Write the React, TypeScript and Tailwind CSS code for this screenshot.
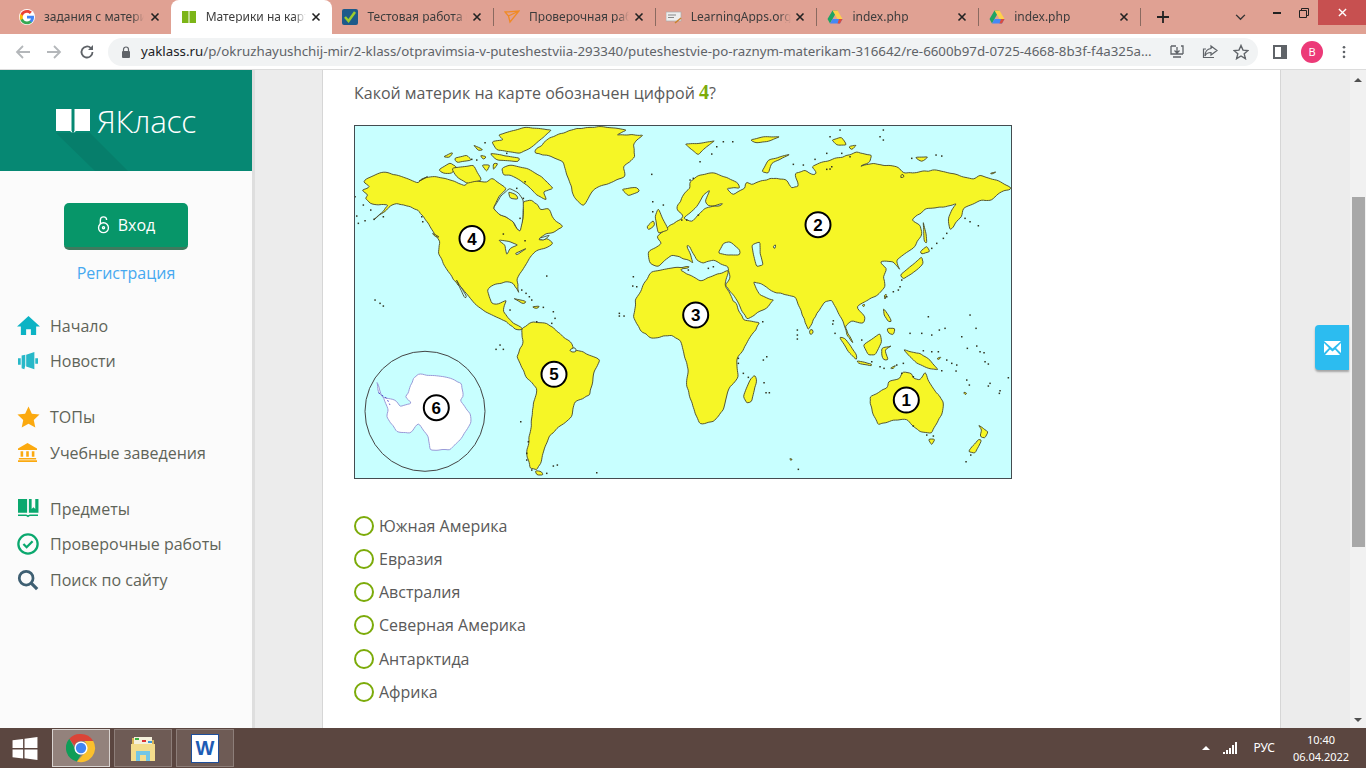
import React from "react";

// points are read off 3x crops of the map, so each crop has its own origin
const z = (ox: number, oy: number, s: string) =>
  s
    .trim()
    .split(/\s+/)
    .map((p) => {
      const [x, y] = p.split(",").map(Number);
      return `${(ox + x / 3).toFixed(1)},${(oy + y / 3).toFixed(1)}`;
    })
    .join(" ");

const z5 = (s: string) => z(350, 120, s);
const z6 = (s: string) => z(680, 120, s);
const z7 = (s: string) => z(350, 300, s);
const z8 = (s: string) => z(680, 300, s);

let seed = 11;
const rnd = () => {
  seed = (seed * 16807) % 2147483647;
  return seed / 2147483647 - 0.5;
};

// roughen a traced outline a little and round it, so that it reads as a coast
function coast(s: string, amp = 1.5) {
  const pts = s
    .trim()
    .split(/\s+/)
    .map((p) => p.split(",").map(Number));
  const out: number[][] = [];
  pts.forEach((a, i) => {
    const b = pts[(i + 1) % pts.length];
    const d = Math.hypot(b[0] - a[0], b[1] - a[1]) || 1;
    const n = Math.max(1, Math.round(d / 4));
    for (let k = 0; k < n; k++) {
      const t = k / n;
      const off = k === 0 ? 0 : rnd() * amp;
      out.push([
        a[0] + (b[0] - a[0]) * t - ((b[1] - a[1]) / d) * off,
        a[1] + (b[1] - a[1]) * t + ((b[0] - a[0]) / d) * off,
      ]);
    }
  });
  const mid = (p: number[], q: number[]) => `${((p[0] + q[0]) / 2).toFixed(1)} ${((p[1] + q[1]) / 2).toFixed(1)}`;
  let path = `M${mid(out[out.length - 1], out[0])}`;
  out.forEach((p, i) => {
    path += `Q${p[0].toFixed(1)} ${p[1].toFixed(1)} ${mid(p, out[(i + 1) % out.length])}`;
  });
  return path + "Z";
}

const northAmerica = z5(
  "40,185 60,172 95,157 120,160 140,165 170,175 205,190 212,178 235,172 260,170 285,175 300,180 325,190 345,198 355,185 375,180 395,185 410,187 425,175 440,185 455,195 470,205 450,225 430,265 450,285 470,292 490,305 500,325 510,335 518,300 520,265 520,245 545,240 565,255 570,270 595,265 610,295 640,320 615,335 590,340 565,360 590,355 610,370 585,385 555,395 530,430 510,460 500,480 507,520 490,490 465,485 430,495 412,510 425,550 445,552 470,540 460,575 490,610 520,628 495,628 470,605 420,582 385,560 365,540 340,510 310,480 285,440 265,400 270,365 250,335 240,320 205,270 170,258 140,250 125,255 110,270 70,300 100,275 115,255 85,255 60,250 45,235 55,225 35,210 60,200"
);
const greenland = z5(
  "555,90 575,78 590,60 620,45 650,35 680,25 720,22 760,20 830,30 800,45 880,45 860,60 850,75 855,110 820,140 825,170 790,185 760,195 730,210 715,235 700,258 680,240 670,225 660,190 650,165 640,125 590,105 555,100"
);
const southAmerica = z7(
  "515,85 550,65 590,70 630,100 665,130 670,150 700,155 750,180 730,225 720,285 675,305 665,350 635,375 600,405 585,440 575,480 560,510 540,505 530,460 540,400 550,320 560,265 530,235 500,170 520,125"
);
const eurasia = [
  z5("980,265 1000,225 1020,205"),
  z6(
    "30,185 60,165 100,158 140,172 175,190 180,205 150,205 140,205 160,225 195,205 200,185 215,195 270,175 290,175 320,180 335,205 355,200 345,160 375,150 400,165 410,160 395,140 430,125 510,105 530,95 575,105 570,125 540,140 580,130 650,140 675,160 720,155 770,150 810,160 880,178 900,165 950,180 995,205 965,215 935,240 905,240 850,265 845,290 810,330 805,300 815,270 830,250 790,262 740,265 695,300 720,315 725,345 700,385 650,420 660,450 640,425 600,425 620,445 610,470 615,500 585,530 555,545"
  ),
  z8(
    "555,5 530,20 555,50 550,70 515,62 495,80 520,130 500,105 490,65 455,0 435,5 410,40 385,90 350,0"
  ),
  z6("345,530 280,515 250,495 220,485 240,525 280,540"),
  z8("280,0 265,20 200,58 170,0"),
  z6(
    "135,495 150,475 145,440 100,420 70,430 50,420 30,380 20,375 40,430 0,410"
  ),
  z5("965,405 925,440 900,430 895,395 935,370 920,350 960,315 990,300 1000,290"),
].join(" ");
const africa = [
  z5("855,565 855,540 905,455 960,445 1020,440"),
  z6("0,450 30,465 60,483 145,450 135,495 160,545"),
  z8(
    "165,5 190,60 240,68 200,130 170,180 175,230 145,270 130,330 100,365 60,372 45,340 20,260 25,210 0,120"
  ),
  z7("965,105 905,115 870,90 850,50"),
].join(" ");
const australia = z8(
  "570,290 620,265 625,245 660,235 670,215 695,220 700,235 720,240 735,215 750,250 790,305 785,345 755,400 720,395 695,375 680,358 640,360 595,375 580,345 570,310"
);
const antarctica = z7(
  "190,235 205,222 290,232 335,250 340,290 330,300 360,340 362,370 330,420 300,450 240,450 235,410 205,370 180,400 140,395 110,350 115,330 100,290 85,275 80,245 95,290 135,300 150,320 185,310 165,290 175,280"
);

const continents = [northAmerica, greenland, southAmerica, africa, eurasia, australia].map((s) => coast(s));

const islands = [
  ...[
    "455,145 480,135 530,145 575,170 610,205 580,215 590,240 560,225 530,195 500,175 480,165 460,165",
    "265,150 300,128 320,140 305,160 280,160",
    "305,145 370,135 395,180 350,190 320,170",
    "445,45 525,22 605,30 570,60 540,85 510,100 440,90 425,65 460,60",
    "280,110 310,97 300,112",
    "312,115 350,105 365,120 320,128",
    "370,75 400,90 385,92",
    "390,105 410,110 400,120",
    "420,100 510,115 505,125 440,120",
    "395,135 420,135 410,155",
    "430,130 445,130 430,150",
    "815,208 860,202 870,213 835,228",
    "915,290 925,265 940,300 955,330 925,340",
    "890,320 910,300 915,315 895,330",
    "490,535 530,545 520,552",
    "205,185 235,168 215,180",
    "245,338 270,352 255,350",
  ].map(z5),
  ...["545,20 570,18 560,27", "555,512 575,515 580,525 560,525"].map(z7),
  ...[
    "225,225 230,240 215,305 200,310 190,290 210,240",
    "388,90 398,88 400,100 390,105",
    "478,110 495,115 530,165 530,180 505,155",
    "530,182 575,192 575,198 535,190",
    "550,135 600,100 605,125 585,165 565,165",
    "605,145 635,137 615,150 625,180 610,180 605,165",
    "610,25 625,45 635,65 625,65 612,45",
    "620,85 645,85 640,105 625,100",
    "670,148 690,155 720,160 750,180 775,210 745,205 710,190 690,170",
    "745,418 765,418 755,435",
    "895,375 925,395 915,415 900,410 905,390",
    "895,418 905,420 885,460 865,455",
    "770,175 785,170 775,180",
    "630,205 648,195 640,207",
    "850,275 862,280 855,285",
    "328,475 338,478 332,482",
  ].map(z8),
  ...[
    "660,465 725,410 730,430 710,450 670,478",
    "720,395 740,378 750,395 725,403",
    "730,305 738,340 740,370 733,365",
    "612,525 620,522 615,540",
    "545,555 555,552 552,562",
    "15,72 60,70 105,62 80,80 55,105 30,85",
    "245,155 265,120 330,103 275,130 265,160",
    "455,60 485,52 500,75 470,75",
    "505,80 530,75 515,90",
    "705,112 745,110 725,125",
    "930,160 950,155 935,163",
    "210,60 250,50 300,50 260,65 225,68",
    "665,160 675,170 660,175",
  ].map(z6),
].map((s) => coast(s, 0.7));

const inlandSeas = [
  z5("478,205 452,228 430,265 450,285 470,292 490,305 500,325 510,335 518,300 520,265 520,240 505,218"),
  z6("90,210 70,225 50,260 40,270 10,295 35,305 60,280 75,265 130,250 120,258 85,258 75,245"),
  z6("115,400 130,370 150,365 180,390 180,405 140,405"),
  z6("215,375 240,365 240,400 250,435 230,440 222,410"),
  z6("278,380 288,372 285,388"),
  z5("445,360 480,365 505,375 480,385 470,405 465,375"),
  z5("495,400 530,385 500,405"),
  z5("565,355 600,345 580,362"),
  z5("318,478 350,530 345,535"),
  z7("658,150 675,142 680,155 665,157"),
].map((s) => coast(s, 0.5));

const bayIsland = coast(z5("475,215 500,225 505,238 480,235"), 0.4);
const antarcticaPath = coast(antarctica, 1.2);

const dots: string[] = [
  ..."405,68 380,120 365,118 470,100 15,230 40,255 62,270 25,310 45,302 72,298 100,290 20,288 215,290 218,305 460,342 525,362 590,468 500,205 525,185 520,235 510,295 905,163 908,245 940,255 908,275 850,470 848,498 860,500 515,510 528,520 538,530 545,540 75,540 90,550 100,558"
    .split(" ")
    .map((p) => z5(p)),
  ..."480,30 610,30 600,50 610,60 440,148 450,147 455,140 510,110 620,530 640,515 655,510 660,500 665,480 800,340 790,355 770,370 755,385 870,305 895,317 855,295 405,118 370,135 340,133 60,125 130,65 158,65 110,80 95,102 450,50 440,100 485,100 768,105 785,108 695,115 30,180 40,175 5,300 55,285 20,300 85,445 100,440 25,450"
    .split(" ")
    .map((p) => z6(p)),
  ...(
    "480,30 450,135 438,148 460,148 512,365 535,425 530,460 530,480 545,510 590,520 610,498 622,495 740,518 580,22 610,35 615,55 605,70 808,40 822,48 808,48 560,65"
  )
    .split(" ")
    .map((p) => z7(p)),
  ...(
    "248,65 175,175 175,190 190,220 205,232 250,180 260,170 252,248 258,278 268,278 352,90 352,105 352,117 460,62 458,72 465,100 545,120 745,50 870,45 888,85 845,110 690,100 725,100 755,105 778,90 795,85 862,145 890,138 900,155 912,158 915,185 925,192 730,152 755,155 775,155 800,180 815,190 830,195 828,213 785,212 860,240 868,255 930,250 925,258 985,233 960,272 958,280 858,485 872,465 355,508 575,185 600,200 612,205 650,195 670,190 700,230 665,220 740,405 760,408 700,378"
  )
    .split(" ")
    .map((p) => z8(p)),
];

const markers = [
  { n: "4", x: 472, y: 238.5 },
  { n: "2", x: 818, y: 224.7 },
  { n: "3", x: 695.7, y: 315 },
  { n: "5", x: 554, y: 374.3 },
  { n: "6", x: 436.3, y: 407.7 },
  { n: "1", x: 906.3, y: 400 },
];

function WorldMap() {
  return (
    <svg viewBox="355 126 656 352" className="block h-full w-full">
      <g fill="#f6f626" stroke="#45452a" strokeWidth="0.9" strokeLinejoin="round">
        {continents.map((d, i) => (
          <path key={i} d={d} />
        ))}
        {islands.map((d, i) => (
          <path key={i} d={d} />
        ))}
      </g>
      <g fill="#c8ffff" stroke="#45452a" strokeWidth="0.9" strokeLinejoin="round">
        {inlandSeas.map((d, i) => (
          <path key={i} d={d} />
        ))}
      </g>
      <path d={bayIsland} fill="#f6f626" stroke="#45452a" strokeWidth="0.9" />
      <g fill="#333320">
        {dots.map((p, i) => {
          const [x, y] = p.split(",").map(Number);
          return <rect key={i} x={x - 0.7} y={y - 0.7} width="1.5" height="1.5" />;
        })}
      </g>
      <circle cx="425" cy="411.3" r="60" fill="none" stroke="#444" strokeWidth="1" />
      <path d={antarcticaPath} fill="#fff" stroke="#9a9ad8" strokeWidth="1" strokeLinejoin="round" />
      <polyline points={z7("85,278 110,295 120,315")} fill="none" stroke="#3a3ac4" strokeWidth="0.8" strokeDasharray="2 2" />
      {markers.map((m) => (
        <g key={m.n}>
          <circle cx={m.x} cy={m.y} r="12.5" fill="#fff" stroke="#000" strokeWidth="2" />
          <text
            x={m.x}
            y={m.y + 6}
            textAnchor="middle"
            fontSize="17"
            fontWeight="700"
            fontFamily="'Liberation Sans', sans-serif"
            fill="#000"
          >
            {m.n}
          </text>
        </g>
      ))}
    </svg>
  );
}

function GoogleIcon() {
  return (
    <svg viewBox="0 0 48 48" className="h-4 w-4 shrink-0 rounded-full bg-white">
      <path fill="#4285f4" d="M45 24.5c0-1.600-.1-3.100-.4-4.500H24v8.500h11.800c-.5 2.700-2 5-4.400 6.600v5.500h7.100C42.600 36.800 45 31.200 45 24.500z" />
      <path fill="#34a853" d="M24 46c5.900 0 10.900-2 14.500-5.400l-7.100-5.500c-2 1.300-4.500 2.100-7.400 2.100-5.700 0-10.500-3.800-12.200-9H4.500v5.700C8.100 41 15.500 46 24 46z" />
      <path fill="#fbbc05" d="M11.800 28.700c-.9-2.700-.9-5.600 0-8.300v-5.700H4.500c-3 6-3 13.100 0 19.100z" />
      <path fill="#ea4335" d="M24 11.400c3.200 0 6.100 1.100 8.400 3.300l6.300-6.300C34.900 4.800 29.900 3 24 3 15.500 3 8.100 8 4.500 14.700l7.300 5.700c1.700-5.200 6.500-9 12.200-9z" />
    </svg>
  );
}

function BookIcon() {
  return (
    <svg viewBox="0 0 16 16" className="h-4 w-4 shrink-0">
      <rect x="1" y="2" width="6.500" height="12" fill="#7cb518" />
      <rect x="8.500" y="2" width="6.500" height="12" fill="#7cb518" />
    </svg>
  );
}

function CheckIcon() {
  return (
    <svg viewBox="0 0 16 16" className="h-4 w-4 shrink-0">
      <rect width="16" height="16" rx="2" fill="#1d5a8a" />
      <path d="M3 8l3.500 4L13 3" fill="none" stroke="#9ccc2c" strokeWidth="2.500" />
    </svg>
  );
}

function SendIcon() {
  return (
    <svg viewBox="0 0 16 16" className="h-4 w-4 shrink-0" fill="none" stroke="#f08a24" strokeWidth="1.300">
      <path d="M1 3l14-1-9 11-1.500-6zM4.500 7L15 2" />
    </svg>
  );
}

function AppsIcon() {
  return (
    <svg viewBox="0 0 16 16" className="h-4 w-4 shrink-0">
      <rect x="0" y="3" width="15" height="9" fill="#eee" stroke="#aaa" strokeWidth="0.700" />
      <path d="M2 6h8M2 8.500h6" stroke="#888" />
      <path d="M9 14l6-5" stroke="#c9822c" strokeWidth="1.500" />
    </svg>
  );
}

function DriveIcon() {
  return (
    <svg viewBox="0 0 16 16" className="h-4 w-4 shrink-0">
      <polygon points="5.500,1.500 10.500,1.500 5.500,10 3,14.500 0.500,10" fill="#1fa463" />
      <polygon points="10.500,1.500 15.500,10 10.500,10 5.500,1.500" fill="#ffd04b" />
      <polygon points="3,14.500 13,14.500 15.500,10 5.500,10" fill="#4688f4" />
      <polygon points="13,14.500 15.500,10 12,10 10.500,14.500" fill="#dd4b3e" />
    </svg>
  );
}

const tabs = [
  { title: "задания с матери", icon: <GoogleIcon /> },
  { title: "Материки на карт", icon: <BookIcon />, active: true },
  { title: "Тестовая работа п", icon: <CheckIcon /> },
  { title: "Проверочная раб", icon: <SendIcon /> },
  { title: "LearningApps.org", icon: <AppsIcon /> },
  { title: "index.php", icon: <DriveIcon /> },
  { title: "index.php", icon: <DriveIcon /> },
];

function TabClose() {
  return (
    <svg viewBox="0 0 10 10" className="h-[10px] w-[10px] shrink-0" stroke="#222" strokeWidth="1.600">
      <path d="M1.500 1.500l7 7M8.500 1.500l-7 7" />
    </svg>
  );
}

function TabBar() {
  return (
    <div className="flex h-[34px] shrink-0 items-stretch bg-[#e0a193] pl-[9px] font-['Noto_Sans',sans-serif] text-[12px] text-[#3c3c3c]">
      {tabs.map((t, i) => (
        <div
          key={i}
          className={
            t.active
              ? "flex w-[161.700px] shrink-0 items-center rounded-t-lg bg-white pl-[10px] pr-[11px]"
              : i >= 2
                ? "flex w-[161.700px] shrink-0 items-center border-r border-r-[#8a6a60] bg-clip-padding pl-[10px] pr-[11px] [border-image:linear-gradient(transparent_25%,#8a6a60_25%,#8a6a60_75%,transparent_75%)_1]"
                : "flex w-[161.700px] shrink-0 items-center pl-[10px] pr-[11px]"
          }
        >
          {t.icon}
          <span className="ml-[9px] w-[100px] whitespace-nowrap leading-none [mask-image:linear-gradient(90deg,#000_88%,transparent)]">
            {t.title}
          </span>
          <div className="ml-auto">
            <TabClose />
          </div>
        </div>
      ))}
      <div className="ml-[15px] flex w-[16px] items-center">
        <svg viewBox="0 0 14 14" className="h-[14px] w-[14px]" stroke="#222" strokeWidth="1.800">
          <path d="M7 1v12M1 7h12" />
        </svg>
      </div>
      <div className="ml-[63px] flex items-center">
        <svg viewBox="0 0 12 8" className="h-[7px] w-[11px]" fill="none" stroke="#333" strokeWidth="1.600">
          <path d="M1 1l5 5 5-5" />
        </svg>
      </div>
      <div className="ml-auto flex h-[25px] items-center">
        <div className="mr-[18px] h-[2px] w-[8px] bg-[#222]" />
        <svg viewBox="0 0 10 10" className="mr-[9px] h-[10px] w-[10px]" fill="none" stroke="#222">
          <path d="M.5 2.500h7v7h-7zM2.500 2.500v-2h7v7h-2" />
        </svg>
        <div className="flex h-[25px] w-[48px] items-center justify-center bg-[#c75050]">
          <svg viewBox="0 0 10 10" className="h-[9px] w-[9px]" stroke="#fff" strokeWidth="1.500">
            <path d="M1 1l8 8M9 1l-8 8" />
          </svg>
        </div>
      </div>
    </div>
  );
}

function Toolbar() {
  return (
    <div className="flex h-[36px] shrink-0 items-start border-b border-[#dcdcdc] bg-white pt-[4px] font-['Noto_Sans',sans-serif]">
      <div className="flex h-[28px] w-[108px] shrink-0 items-center pl-[15px]">
        <svg viewBox="0 0 16 16" className="h-4 w-4" fill="none" stroke="#b4b7ba" strokeWidth="1.800">
          <path d="M15 8H2M8 2L2 8l6 6" />
        </svg>
        <svg viewBox="0 0 16 16" className="ml-[15px] h-4 w-4" fill="none" stroke="#b4b7ba" strokeWidth="1.800">
          <path d="M1 8h13M8 2l6 6-6 6" />
        </svg>
        <svg viewBox="0 0 16 16" className="ml-[17px] h-4 w-4" fill="none" stroke="#5f6368" strokeWidth="1.800">
          <path d="M13.500 8a5.500 5.500 0 1 1-1.600-3.900" />
          <path d="M14 1v5h-5" fill="#5f6368" stroke="none" />
        </svg>
      </div>
      <div className="flex h-[28px] w-[1150px] shrink-0 items-center rounded-full bg-[#f1f3f4] pl-[13px] pr-[9px]">
        <svg viewBox="0 0 10 12" className="h-[12px] w-[10px] shrink-0" fill="#5f6368">
          <rect x="1" y="5" width="8" height="7" rx="1" />
          <path d="M2.500 5V3.500a2.500 2.500 0 0 1 5 0V5" fill="none" stroke="#5f6368" strokeWidth="1.200" />
        </svg>
        <span className="ml-[10px] whitespace-nowrap text-[13.300px] leading-none text-[#5f6368]">
          <span className="text-[#202124]">yaklass.ru</span>
          /p/okruzhayushchij-mir/2-klass/otpravimsia-v-puteshestviia-293340/puteshestvie-po-raznym-materikam-316642/re-6600b97d-0725-4668-8b3f-f4a325a...
        </span>
        <svg viewBox="0 0 16 16" className="ml-auto h-4 w-4 shrink-0" fill="none" stroke="#5f6368" strokeWidth="1.300">
          <path d="M2 2h5M12 2h2v8M2 2v8h12M8 3v6M5.500 6.500L8 9l2.500-2.500M4 13h8" />
        </svg>
        <svg viewBox="0 0 16 16" className="ml-[17px] h-4 w-4 shrink-0" fill="none" stroke="#5f6368" strokeWidth="1.200">
          <path d="M9 2l6 4.500L9 11V8.500C6 8.500 4 9.500 3 12c0-4 2-7 6-7.500zM12 13.500H1.500V5H4" />
        </svg>
        <svg viewBox="0 0 16 16" className="ml-[15px] h-4 w-4 shrink-0" fill="none" stroke="#5f6368" strokeWidth="1.400">
          <path d="M8 1.500l2 4.600 5 .4-3.800 3.300 1.200 4.900L8 12l-4.400 2.700 1.200-4.900L1 6.500l5-.4z" />
        </svg>
      </div>
      <div className="flex h-[28px] flex-1 items-center">
        <svg viewBox="0 0 14 14" className="ml-[15px] h-[14px] w-[14px]">
          <rect x="1" y="1" width="12" height="12" fill="none" stroke="#5f6368" strokeWidth="2" />
          <rect x="8" y="1" width="5" height="12" fill="#5f6368" />
        </svg>
        <div className="ml-[14px] flex h-[22px] w-[22px] items-center justify-center rounded-full bg-[#ec3a78] text-[11px] text-white">
          B
        </div>
        <svg viewBox="0 0 4 16" className="ml-[19px] h-[14px] w-[4px]" fill="#5f6368">
          <circle cx="2" cy="2.500" r="1.500" />
          <circle cx="2" cy="8" r="1.500" />
          <circle cx="2" cy="13.500" r="1.500" />
        </svg>
      </div>
    </div>
  );
}

const navGroups = [
  [
    {
      label: "Начало",
      icon: (
        <svg viewBox="0 0 24 22" className="h-[21px] w-[23px]">
          <path d="M12 1L0 12h4v9h5.500v-6h5v6H20v-9h4z" fill="#0bb3c4" />
        </svg>
      ),
    },
    {
      label: "Новости",
      icon: (
        <svg viewBox="0 0 24 22" className="h-[20px] w-[22px]">
          <path d="M1 8h3v7H1zM5 5l4-1v12l-1 4-3-1zM10 4l9-3v19l-9-3zM20 8h3v6h-3z" fill="#27b8c8" />
        </svg>
      ),
    },
  ],
  [
    {
      label: "ТОПы",
      icon: (
        <svg viewBox="0 0 24 22" className="h-[22px] w-[23px]">
          <path d="M12 0l3.500 7.500 8 1-6 5.500 1.600 8L12 18l-7.100 4 1.600-8-6-5.500 8-1z" fill="#fba90f" />
        </svg>
      ),
    },
    {
      label: "Учебные заведения",
      icon: (
        <svg viewBox="0 0 24 22" className="h-[19px] w-[21px]">
          <path d="M12 0L1 6.500v1.500h22V6.500zM4 9.500h3V16H4zM10.500 9.500h3V16h-3zM17 9.500h3V16h-3zM2 17.500h20V19H2zM1 20h22v2H1z" fill="#fba90f" />
        </svg>
      ),
    },
  ],
  [
    {
      label: "Предметы",
      icon: (
        <svg viewBox="0 0 24 22" className="h-[20px] w-[22px]">
          <path d="M1 0h10v15H1zM13 0h3v11l2-2 2 2V0h3.500v15H13zM1 17h9l2 1 2-1h9v1.800H14l-2 1.200-2-1.200H1z" fill="#0aa86e" />
        </svg>
      ),
    },
    {
      label: "Проверочные работы",
      icon: (
        <svg viewBox="0 0 24 24" className="h-[22px] w-[22px]">
          <circle cx="12" cy="12" r="10.500" fill="none" stroke="#0aa86e" strokeWidth="2.500" />
          <path d="M7 12l3.500 3.500L17 9" fill="none" stroke="#0aa86e" strokeWidth="2.500" />
        </svg>
      ),
    },
    {
      label: "Поиск по сайту",
      icon: (
        <svg viewBox="0 0 24 24" className="h-[22px] w-[22px]" fill="none" stroke="#3e5f72">
          <circle cx="10" cy="10" r="7.500" strokeWidth="3" />
          <path d="M15.500 15.500L22 22" strokeWidth="3.500" />
        </svg>
      ),
    },
  ],
];

function Sidebar() {
  return (
    <aside className="w-[252px] shrink-0 bg-[#fbfbfb]">
      <div className="relative flex h-[101px] items-center overflow-hidden bg-[#068873] pl-[56px]">
        {/* long shadow under the book */}
        <svg viewBox="0 0 252 101" className="absolute left-0 top-0 h-[101px] w-[252px]">
          <polygon points="56,63 90,63 128,101 95,101" fill="#067e6b" />
        </svg>
        <svg viewBox="0 0 34 24" className="relative h-[24px] w-[34px]" fill="#fff">
          <path d="M0 0h15.500v21.500L16.500 24 14 22H0zM18.500 0H34v22H20l-2.500 2 1-2.500z" />
        </svg>
        <span className="relative ml-[7px] font-['Open_Sans',sans-serif] text-[31.500px] font-light leading-none tracking-[-0.01em] text-white">
          ЯКласс
        </span>
      </div>
      <div className="flex flex-col items-center pt-[32px]">
        <button className="flex h-[47px] w-[124px] items-center justify-center gap-[8px] rounded-[5px] border-b-[3px] border-[#3e7a5e] bg-[#079669] font-['Open_Sans',sans-serif] text-[16px] text-white">
          <svg viewBox="0 0 14 20" className="h-[18px] w-[13px]" fill="none" stroke="#fff" strokeWidth="1.500">
            <circle cx="7" cy="13" r="5.500" />
            <circle cx="7" cy="13" r="1.200" />
            <path d="M3.500 9V4.500a3.500 3.500 0 0 1 7 0" />
          </svg>
          Вход
        </button>
        <a className="mt-[12px] font-['Open_Sans',sans-serif] text-[16px] leading-[22px] text-[#46a9f0]">Регистрация</a>
      </div>
      <nav className="flex flex-col gap-[31px] pl-[17px] pt-[29px] font-['Open_Sans',sans-serif] text-[16px] text-[#5f6459]">
        {navGroups.map((group, gi) => (
          <div key={gi} className="flex flex-col gap-[10.500px]">
            {group.map((item) => (
              <div key={item.label} className="flex h-[25px] items-center">
                <div className="flex w-[33px] shrink-0 items-center">{item.icon}</div>
                {item.label}
              </div>
            ))}
          </div>
        ))}
      </nav>
    </aside>
  );
}

const options = ["Южная Америка", "Евразия", "Австралия", "Северная Америка", "Антарктида", "Африка"];

function Content() {
  return (
    <main className="relative flex min-w-0 flex-1 border-l-[3px] border-[#dedede] bg-[#ececec] pl-[67px]">
      <div className="w-[959px] shrink-0 border-x border-[#d6d6d6] bg-white pl-[31px] pt-[10px] font-['Open_Sans',sans-serif] text-[16px] text-[#5a5a5a]">
        <p className="leading-[24px]">
          Какой материк на карте обозначен цифрой{" "}
          <b className="font-['Liberation_Serif',serif] text-[20px] text-[#7cab0a]">4</b>?
        </p>
        <div className="mt-[20px] h-[354px] w-[658px] border border-[#444c50] bg-[#c8ffff]">
          <WorldMap />
        </div>
        <ul className="mt-[34.500px] flex flex-col gap-[9.300px]">
          {options.map((o) => (
            <li key={o} className="flex h-[24px] items-center">
              <span className="h-[20px] w-[20px] rounded-full border-[2.500px] border-[#7cab0a] bg-white" />
              <span className="ml-[5px]">{o}</span>
            </li>
          ))}
        </ul>
      </div>
      <div className="absolute right-[1px] top-[255px] flex h-[45px] w-[34px] items-center justify-center rounded-l-[4px] bg-[#2cbcf0] shadow-[0_2px_2px_rgba(0,0,0,0.3)]">
        <svg viewBox="0 0 17 14" className="h-[14px] w-[17px]">
          <path d="M0 0h17L8.500 7.500zM0 2l5 5-5 5zM17 2l-5 5 5 5zM1 14l5-5.500 2.500 2 2.500-2 5 5.500z" fill="#fff" />
        </svg>
      </div>
    </main>
  );
}

function Scrollbar() {
  return (
    <div className="flex w-[16px] shrink-0 flex-col items-center bg-[#f1f1f1]">
      <div className="mt-[8px] h-0 w-0 border-x-[4px] border-b-[4px] border-x-transparent border-b-[#505050]" />
      <div className="mt-[115px] h-[350px] w-[13px] bg-[#a8a8a8]" />
      <div className="mt-auto mb-[6px] h-0 w-0 border-x-[4px] border-t-[4px] border-x-transparent border-t-[#505050]" />
    </div>
  );
}

function Taskbar() {
  return (
    <div className="flex h-[40px] shrink-0 items-stretch bg-[#5b4640] font-['Noto_Sans',sans-serif] text-white">
      <div className="flex w-[52px] shrink-0 items-center pl-[12px]">
        <svg viewBox="0 0 26 24" className="h-[23px] w-[26px]" fill="#fff">
          <path d="M0 3.500l11-1.500v9.500H0zM12.500 1.800L26 0v11.500H12.500zM0 13h11v9.500L0 21zM12.500 13H26v11l-13.500-1.800z" />
        </svg>
      </div>
      <div className="my-[1px] flex w-[58px] items-center justify-center border border-[#d9d3d0] bg-[#93827c]">
        <svg viewBox="0 0 32 32" className="h-[30px] w-[30px]">
          <path d="M16 1a15 15 0 0 1 13 7.500H16a7.500 7.500 0 0 0-7 4.700L3.500 6A15 15 0 0 1 16 1z" fill="#db4437" />
          <path d="M3.500 6l6.200 11a7.500 7.500 0 0 0 6 6.400L11.600 30.400A15 15 0 0 1 3.500 6z" fill="#0f9d58" />
          <path d="M29 8.500A15 15 0 0 1 11.600 30.400l6.500-7.300a7.500 7.500 0 0 0 4-7.100 7.500 7.500 0 0 0-2.500-7.500z" fill="#fbc02d" />
          <circle cx="16" cy="16" r="7" fill="#fff" />
          <circle cx="16" cy="16" r="5.500" fill="#4285f4" />
        </svg>
      </div>
      <div className="my-[1px] ml-[4px] flex w-[58px] items-center justify-center border border-[#8d7e79] bg-[#6e5b55]">
        <svg viewBox="0 0 30 30" className="h-[30px] w-[30px]">
          <path d="M4 5h8l2 2h12v8H4z" fill="#d8b558" />
          <rect x="6" y="4" width="18" height="8" fill="#f5f0dc" />
          <rect x="7" y="5" width="4" height="2" fill="#3cb043" />
          <rect x="14" y="7" width="4" height="2" fill="#d33" />
          <rect x="20" y="8" width="4" height="2" fill="#3a9ad9" />
          <path d="M3 11h24v17H3z" fill="#f3dc8c" />
          <path d="M8 28V18h14v10h-4v-6h-6v6z" fill="#72c6e6" />
        </svg>
      </div>
      <div className="my-[1px] ml-[4px] flex w-[58px] items-center justify-center border border-[#8d7e79] bg-[#6e5b55]">
        <div className="flex h-[29px] w-[28px] items-start justify-center border border-[#1d4f9c] bg-white pt-[3px]">
          <span className="font-['Liberation_Sans',sans-serif] text-[20px] font-bold leading-none text-[#1d5cb4]">W</span>
        </div>
      </div>
      <div className="ml-auto flex items-center pr-[15px]">
        <div className="h-0 w-0 border-x-[4px] border-b-[4px] border-x-transparent border-b-white" />
        <svg viewBox="0 0 16 12" className="ml-[13px] h-[12px] w-[16px]" fill="#fff">
          <rect x="0" y="10" width="2" height="2" />
          <rect x="3" y="8" width="2" height="4" />
          <rect x="6" y="6" width="2" height="6" />
          <rect x="9" y="3" width="2" height="9" />
          <rect x="12" y="0" width="2" height="12" />
        </svg>
        <span className="ml-[14px] text-[12px]">РУС</span>
        <div className="ml-[16px] flex w-[60px] flex-col items-center text-[11px] leading-[17px]">
          <span>10:40</span>
          <span>06.04.2022</span>
        </div>
      </div>
    </div>
  );
}

export default function App() {
  return (
    <div className="flex h-screen w-full flex-col overflow-hidden">
      <TabBar />
      <Toolbar />
      <div className="flex min-h-0 flex-1">
        <Sidebar />
        <Content />
        <Scrollbar />
      </div>
      <Taskbar />
    </div>
  );
}
